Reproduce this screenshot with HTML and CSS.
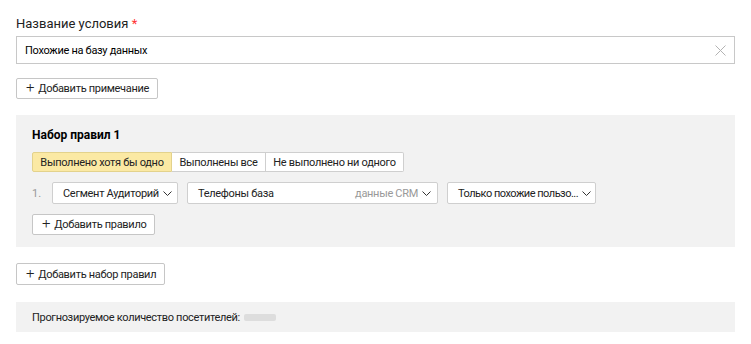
FILE: index.html
```html
<!DOCTYPE html>
<html lang="ru">
<head>
  <meta charset="UTF-8" />
  <title>Условие</title>
  <link rel="stylesheet" href="styles.css">
</head>
<body>
  <div class="form">
    <div class="label">Название условия <span class="req">*</span></div>
    <div class="input">
      <span>Похожие на базу данных</span>
      <svg class="clear" width="11" height="11" viewBox="0 0 11 11"><path d="M0.5 0.5L10.5 10.5M10.5 0.5L0.5 10.5" stroke="#b3b3b3" stroke-width="1" fill="none"/></svg>
    </div>
    <button class="btn btn-note"><span class="plus">+</span> Добавить примечание</button>

    <div class="ruleset">
      <div class="ruleset-title">Набор правил 1</div>
      <div class="segmented">
        <button class="seg active">Выполнено хотя бы одно</button>
        <button class="seg">Выполнены все</button>
        <button class="seg">Не выполнено ни одного</button>
      </div>
      <div class="rule">
        <span class="num">1.</span>
        <div class="select s1"><span class="txt">Сегмент Аудиторий</span><svg class="chev" width="9" height="5" viewBox="0 0 9 5"><path d="M0.5 0.5L4.5 4.5L8.5 0.5" stroke="#333" fill="none"/></svg></div>
        <div class="select s2"><span class="txt">Телефоны база</span><span class="hint">данные CRM</span><svg class="chev" width="9" height="5" viewBox="0 0 9 5"><path d="M0.5 0.5L4.5 4.5L8.5 0.5" stroke="#333" fill="none"/></svg></div>
        <div class="select s3"><span class="txt">Только похожие пользо...</span><svg class="chev" width="9" height="5" viewBox="0 0 9 5"><path d="M0.5 0.5L4.5 4.5L8.5 0.5" stroke="#333" fill="none"/></svg></div>
      </div>
      <button class="btn btn-rule"><span class="plus">+</span> Добавить правило</button>
    </div>

    <button class="btn btn-set"><span class="plus">+</span> Добавить набор правил</button>

    <div class="forecast">
      Прогнозируемое количество посетителей: <span class="skeleton"></span>
    </div>
  </div>
</body>
</html>
```

FILE: styles.css
```css
body {
  margin: 0;
  padding: 0;
  background: #fff;
  color: #000;
  font-family: Roboto, "Liberation Sans", sans-serif;
}

.form {
  padding: 16px 16px 0;
  display: flex;
  flex-direction: column;
  align-items: flex-start;
}

.label {
  font-size: 13px;
  line-height: 16px;
  color: #222;
}

.req {
  color: #f33;
}

.input {
  box-sizing: border-box;
  width: 100%;
  height: 28px;
  margin-top: 4px;
  border: 1px solid #c8c8c8;
  display: flex;
  align-items: center;
  justify-content: space-between;
  padding: 0 8px 0 8px;
  font-size: 11px;
  letter-spacing: -0.3px;
}

.btn {
  box-sizing: border-box;
  height: 21px;
  padding: 0 8px 0 9px;
  background: #fff;
  border: 1px solid #c6c6c6;
  border-radius: 2px;
  font-family: inherit;
  font-size: 11px;
  letter-spacing: -0.3px;
  color: #222;
  display: flex;
  align-items: center;
  gap: 4px;
  white-space: nowrap;
}

.plus {
  font-size: 15px;
  font-weight: 300;
  line-height: 1;
  margin-top: -2px;
}

.btn-note {
  margin-top: 14px;
}

.ruleset {
  box-sizing: border-box;
  width: 100%;
  margin-top: 16px;
  background: #f2f2f2;
  padding: 12px 16px 12px;
  display: flex;
  flex-direction: column;
  align-items: flex-start;
}

.ruleset-title {
  font-size: 12px;
  font-weight: bold;
  line-height: 16px;
}

.segmented {
  display: flex;
  margin-top: 9px;
}

.seg {
  box-sizing: border-box;
  height: 20px;
  padding: 0;
  background: #fff;
  border: 1px solid #cfcfcf;
  border-left: none;
  font-family: inherit;
  font-size: 11px;
  letter-spacing: -0.3px;
  color: #222;
  white-space: nowrap;
}

.seg:first-child {
  border-left: 1px solid #d8c98a;
  border-radius: 2px 0 0 2px;
}

.seg:last-child {
  border-radius: 0 2px 2px 0;
}

.seg.active {
  background: #fbe9a4;
  border-color: #e3d28c;
  width: 140px;
}

.seg:nth-child(2) {
  width: 94px;
}

.seg:nth-child(3) {
  width: 138px;
}

.rule {
  display: flex;
  align-items: center;
  gap: 9px;
  margin-top: 10px;
}

.num {
  width: 11px;
  font-size: 11px;
  color: #999;
}

.select {
  box-sizing: border-box;
  height: 22px;
  background: #fff;
  border: 1px solid #cfcfcf;
  border-radius: 2px;
  padding: 0 6px 0 10px;
  display: flex;
  align-items: center;
  font-size: 11px;
  letter-spacing: -0.3px;
  color: #222;
  white-space: nowrap;
  overflow: hidden;
}

.select .chev {
  margin-left: 4px;
  flex: none;
}

.s1 { width: 126px; }
.s2 { width: 251px; }
.s3 {
  width: 149px;
  letter-spacing: -0.5px;
  padding-right: 5px;
}

.s2 .txt {
  flex: 1;
}

.hint {
  color: #999;
}

.btn-rule {
  margin-top: 10px;
}

.btn-set {
  margin-top: 16px;
  height: 22px;
}

.forecast {
  box-sizing: border-box;
  width: 100%;
  height: 30px;
  margin-top: 17px;
  background: #f2f2f2;
  padding: 0 16px;
  display: flex;
  align-items: center;
  font-size: 11px;
  letter-spacing: -0.32px;
  color: #222;
}

.skeleton {
  display: inline-block;
  width: 32px;
  height: 7px;
  margin-left: 4px;
  background: #ddd;
  border-radius: 2px;
}
```
